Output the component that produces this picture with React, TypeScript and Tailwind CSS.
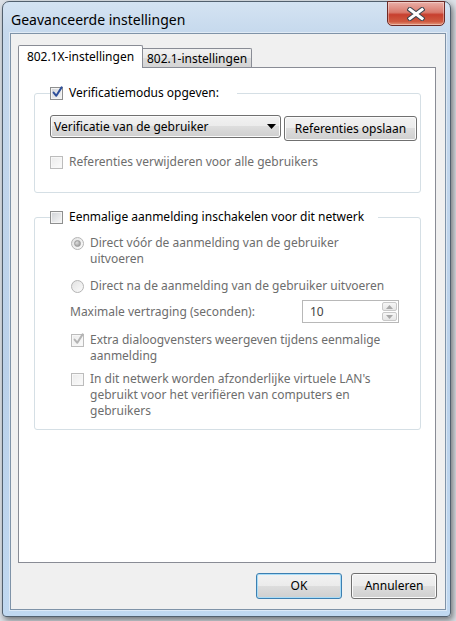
import type { ReactNode } from "react";

// Win7 style checkbox
function CheckBox({ checked = false, disabled = false }: { checked?: boolean; disabled?: boolean }) {
  return (
    <span
      className={
        disabled
          ? "relative mt-[2px] flex h-[13px] w-[13px] shrink-0 items-center justify-center border border-[#bcbcbc] bg-[linear-gradient(135deg,#ebebeb,#fbfbfb)] shadow-[inset_0_0_0_1px_#f7f7f7]"
          : "relative mt-[2px] flex h-[13px] w-[13px] shrink-0 items-center justify-center border border-[#8e8f8f] bg-[linear-gradient(135deg,#cfd2d6,#f8f8f8)] shadow-[inset_0_0_0_1px_#f4f4f4]"
      }
    >
      {checked && (
        <svg viewBox="0 0 11 12" className="absolute -top-[2px] left-[1px] h-[12px] w-[11px]">
          <path
            d="M1.6 6.6 L4.3 9.8 L9.6 1.4"
            fill="none"
            stroke={disabled ? "#b4b4b4" : "#2e4f9a"}
            strokeWidth="2"
            strokeLinecap="round"
            strokeLinejoin="round"
          />
        </svg>
      )}
    </span>
  );
}

function Radio({ checked = false }: { checked?: boolean }) {
  return (
    <span className="mt-[2px] flex h-[13px] w-[13px] shrink-0 items-center justify-center rounded-full border border-[#b4b4b4] bg-[linear-gradient(135deg,#e2e2e2,#fbfbfb)]">
      {checked && (
        <span className="h-[7px] w-[7px] rounded-full border border-[#9c9c9c] bg-[radial-gradient(circle_at_35%_35%,#dedede,#8e8e8e)]" />
      )}
    </span>
  );
}

function Option({
  control,
  children,
  muted = false,
}: {
  control: ReactNode;
  children: ReactNode;
  muted?: boolean;
}) {
  return (
    <div className={muted ? "flex items-start gap-[6px] text-[#6d6d6d]" : "flex items-start gap-[6px] text-black"}>
      {control}
      <span className="leading-[16px]">{children}</span>
    </div>
  );
}

function PushButton({ children, primary = false, className = "" }: { children: ReactNode; primary?: boolean; className?: string }) {
  return (
    <button
      className={`flex items-center justify-center rounded-[3px] border bg-[linear-gradient(#f2f2f2,#ebebeb_50%,#dddddd_50%,#cfcfcf)] leading-[16px] text-black ${
        primary
          ? "border-[#3c7fb1] shadow-[inset_0_0_0_1px_#a8dcf7]"
          : "border-[#707070] shadow-[inset_0_0_0_1px_#fbfbfb]"
      } ${className}`}
    >
      {children}
    </button>
  );
}

export default function App() {
  return (
    <div className="relative h-[621px] w-[456px] overflow-hidden bg-[#dde2e8] font-['Noto_Sans',sans-serif] text-[12px] text-black">
      {/* window */}
      <div className="relative ml-[2px] mt-[1px] flex h-[616px] w-[449px] flex-col rounded-t-[7px] rounded-b-[4px] border border-[#52606e] bg-[linear-gradient(180deg,#d4e3f2_0%,#c6d9ed_5%,#bad1ea_60%,#c0d8f0_100%)] pb-[6px] pl-[7px] pr-[4px] shadow-[2px_3px_6px_rgba(0,0,0,0.5)]">
        {/* title bar */}
        <div className="h-[31px] pl-[1px] pt-[8px] text-[14px] leading-[20px] text-black">
          Geavanceerde instellingen
        </div>

        {/* close button */}
        <div className="absolute -top-px right-[5px] flex h-[25px] w-[58px] items-center justify-center rounded-b-[5px] border border-[#6e2a25] bg-[linear-gradient(180deg,#eab0a8_0%,#d97a6d_45%,#c7402f_55%,#cf5a40_85%,#e49a7e_100%)] shadow-[inset_0_0_0_1px_rgba(255,255,255,0.35)]">
          <svg viewBox="0 0 18 14" className="h-[14px] w-[18px]">
            <path d="M3 2.5 L15 11.5 M15 2.5 L3 11.5" stroke="#3c4650" strokeWidth="5" strokeLinecap="square" />
            <path d="M3 2.5 L15 11.5 M15 2.5 L3 11.5" stroke="#ffffff" strokeWidth="3" strokeLinecap="square" />
          </svg>
        </div>

        {/* client area */}
        <div className="flex flex-1 flex-col border border-[#7f93a8] bg-[#f0f0f0] pb-[10px] pl-[7px] pr-[8px] pt-[11px] shadow-[0_0_0_1px_rgba(255,255,255,0.45)]">
          {/* tabs */}
          <div className="relative z-10 flex h-[22px] items-end">
            <div className="-mb-px flex h-[23px] w-[125px] items-center justify-center rounded-t-[2px] border border-b-0 border-[#898c95] bg-white pb-[1px] leading-[16px]">
              802.1X-instellingen
            </div>
            <div className="flex h-[19px] w-[109px] items-center justify-center rounded-tr-[2px] border border-b-0 border-l-0 border-[#898c95] bg-[linear-gradient(#f2f2f2,#e8e8e8_50%,#dcdcdc_50%,#d4d4d4)] pt-[1px] leading-[16px]">
              802.1-instellingen
            </div>
          </div>

          {/* tab panel */}
          <div className="mr-[1px] flex-1 border border-[#898c95] bg-white pl-[15px] pt-[17px]">
            {/* group 1 */}
            <fieldset className="w-[387px] rounded-[3px] border border-[#d5dfe5] pb-[22px] pl-[15px] pr-[3px]">
              <legend className="pr-[18px]">
                <Option control={<CheckBox checked />}>Verificatiemodus opgeven:</Option>
              </legend>
              <div className="mt-[14px] flex items-start justify-between">
                <div className="flex h-[23px] w-[231px] items-center justify-between rounded-[3px] border border-[#707070] bg-[linear-gradient(#f2f2f2,#ebebeb_50%,#dddddd_50%,#cfcfcf)] pl-[3px] pr-[3px] shadow-[inset_0_0_0_1px_#fbfbfb]">
                  <span className="leading-[16px]">Verificatie van de gebruiker</span>
                  <svg viewBox="0 0 9 5" className="mr-[1px] h-[5px] w-[9px]">
                    <path d="M0 0 H9 L4.5 5 Z" fill="#000" />
                  </svg>
                </div>
                <PushButton className="mt-[1px] h-[25px] w-[133px]">Referenties opslaan</PushButton>
              </div>
              <div className="mt-[13px]">
                <Option muted control={<CheckBox disabled />}>
                  Referenties verwijderen voor alle gebruikers
                </Option>
              </div>
            </fieldset>

            {/* group 2 */}
            <fieldset className="mt-[16px] w-[387px] rounded-[3px] border border-[#d5dfe5] pb-[10px] pl-[15px]">
              <legend className="pr-[14px]">
                <Option control={<CheckBox />}>Eenmalige aanmelding inschakelen voor dit netwerk</Option>
              </legend>
              <div className="ml-[21px] flex flex-col">
                <div className="mt-[10px]">
                  <Option muted control={<Radio checked />}>
                    Direct vóór de aanmelding van de gebruiker
                    <br />
                    uitvoeren
                  </Option>
                </div>
                <div className="mt-[11px]">
                  <Option muted control={<Radio />}>
                    Direct na de aanmelding van de gebruiker uitvoeren
                  </Option>
                </div>
                <div className="-ml-px mt-[6px] flex h-[23px] items-center justify-between pr-[21px] text-[#6d6d6d]">
                  <span className="leading-[16px]">Maximale vertraging (seconden):</span>
                  <div className="flex h-[23px] w-[97px] items-center justify-between border border-[#b8b8b8] bg-white pl-[7px] pr-[1px]">
                    <span className="leading-[16px] text-[#444]">10</span>
                    <div className="flex h-[19px] w-[15px] flex-col gap-px">
                      <span className="flex flex-1 items-center justify-center rounded-[2px] border border-[#c8c8c8] bg-[linear-gradient(#f6f6f6,#e6e6e6)]">
                        <svg viewBox="0 0 7 4" className="h-[4px] w-[7px]">
                          <path d="M0 4 H7 L3.5 0 Z" fill="#a8a8a8" />
                        </svg>
                      </span>
                      <span className="flex flex-1 items-center justify-center rounded-[2px] border border-[#c8c8c8] bg-[linear-gradient(#f6f6f6,#e6e6e6)]">
                        <svg viewBox="0 0 7 4" className="h-[4px] w-[7px]">
                          <path d="M0 0 H7 L3.5 4 Z" fill="#a8a8a8" />
                        </svg>
                      </span>
                    </div>
                  </div>
                </div>
                <div className="mt-[9px]">
                  <Option muted control={<CheckBox checked disabled />}>
                    Extra dialoogvensters weergeven tijdens eenmalige
                    <br />
                    aanmelding
                  </Option>
                </div>
                <div className="mt-[7px]">
                  <Option muted control={<CheckBox disabled />}>
                    In dit netwerk worden afzonderlijke virtuele LAN's
                    <br />
                    gebruikt voor het verifiëren van computers en
                    <br />
                    gebruikers
                  </Option>
                </div>
              </div>
            </fieldset>
          </div>

          {/* dialog buttons */}
          <div className="mt-[10px] flex justify-end gap-[9px]">
            <PushButton primary className="h-[26px] w-[86px]">OK</PushButton>
            <PushButton className="h-[26px] w-[86px]">Annuleren</PushButton>
          </div>
        </div>
      </div>
    </div>
  );
}
